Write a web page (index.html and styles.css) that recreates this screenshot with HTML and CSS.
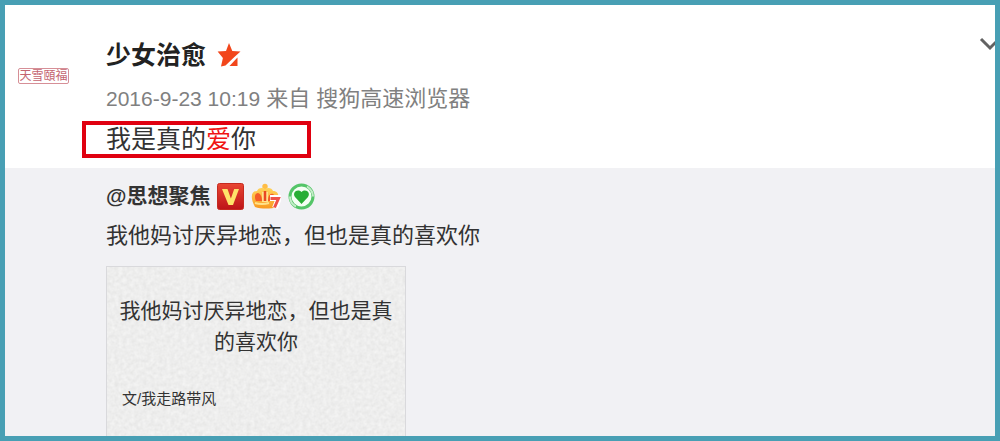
FILE: index.html
```html
<!DOCTYPE html>
<html lang="zh-CN">
<head>
<meta charset="utf-8">
<title>少女治愈</title>
<link rel="stylesheet" href="styles.css">
</head>
<body>
<main class="frame">
  <article class="post">
    <div class="avatar"><span class="stamp">天雪頤福</span></div>
    <div class="content">
      <header class="author">
        <h1 class="name">少女治愈</h1>
        <svg class="star" viewBox="0 0 24 26" aria-hidden="true">
          <path d="M12 1l3.300 8 8.200.5-6.100 5.600-8.900 8.400L4 24.600l1.900-8.700L.6 9.500 9 9z" fill="#f2461b"/>
          <path d="M20.500 15.500V24l-8-.1z" fill="#f2461b"/>
        </svg>
      </header>
      <p class="meta"><time class="date" datetime="2016-09-23T10:19">2016-9-23 10:19</time> 来自 搜狗高速浏览器</p>
      <p class="status">我是真的<em class="keyword">爱</em>你</p>
    </div>
    <button class="more" type="button" aria-label="更多">
      <svg class="chevron" viewBox="0 0 20 14" aria-hidden="true"><path d="M2 2l9 9 8-8" fill="none" stroke="#626262" stroke-width="3"/></svg>
    </button>
  </article>
  <section class="quote">
    <div class="source">
      <a class="handle" href="#">@思想聚焦</a>
      <svg class="badge" viewBox="0 0 27 27" aria-hidden="true">
        <defs><linearGradient id="red" x1="0" y1="0" x2="0" y2="1"><stop offset="0" stop-color="#e94632"/><stop offset="1" stop-color="#bd1418"/></linearGradient></defs>
        <rect x=".5" y=".5" width="26" height="26" rx="2" fill="url(#red)" stroke="#c52a20"/>
        <path d="M5 6h5.500l3.400 9.500L17.200 6H22l-6 16h-4.500z" fill="#ffe36a"/>
      </svg>
      <svg class="crown" viewBox="0 0 30 27" aria-hidden="true">
        <defs><linearGradient id="gold" x1="0" y1="0" x2="0" y2="1"><stop offset="0" stop-color="#ffd35a"/><stop offset="1" stop-color="#f99a20"/></linearGradient></defs>
        <circle cx="14" cy="3.500" r="2.700" fill="#ffbd45"/>
        <path d="M4 24C-1 15 0 8 6 8c2-4 6-3 8-2 3-2 7-1 8 2 6 0 7 6 4 16-6 2-16 2-22 0z" fill="url(#gold)"/>
        <path d="M5 18c-2-4-1-8 2-8 3 1 4 4 4 8zM17 18c0-5 2-8 5-7 3 2 2 4 1 7z" fill="#f45c27"/>
        <path d="M11 9h6v10h-6z" fill="#ffe28b"/>
        <path d="M14 8v10" stroke="#e94822" stroke-width="2.500"/>
        <path d="M4 20q7 2 14 0" fill="none" stroke="#ffe28b" stroke-width="2"/>
        <path d="M19 15h9l-4 10" fill="none" stroke="#fff" stroke-width="6"/>
        <path d="M19.500 15.500h8l-4 9" fill="none" stroke="#ef5148" stroke-width="3"/>
      </svg>
      <svg class="heart" viewBox="0 0 27 27" aria-hidden="true">
        <circle cx="13.500" cy="13.500" r="11.500" fill="#f5fff4" stroke="#54c568" stroke-width="3"/>
        <path d="M19 3.500q6 4 6 10M8 23.500q-6-3-6-10" fill="none" stroke="#c4ecc8" stroke-width="2"/>
        <path d="M13.500 21L7 14c-3-4 2-9 6.500-5 4.500-4 9.500 1 6.500 5z" fill="#28ae35"/>
      </svg>
    </div>
    <p class="quote-text">我他妈讨厌异地恋，但也是真的喜欢你</p>
    <figure class="card">
      <svg class="paper" aria-hidden="true">
        <filter id="grain" x="0" y="0" width="100%" height="100%">
          <feTurbulence type="fractalNoise" baseFrequency=".25" numOctaves="3" seed="4"/>
          <feColorMatrix values="0.16 0 0 0 .77  0.16 0 0 0 .77  0.16 0 0 0 .765  0 0 0 0 1"/>
        </filter>
        <rect width="100%" height="100%" filter="url(#grain)"/>
      </svg>
      <blockquote class="verse">我他妈讨厌异地恋，但也是真<br>的喜欢你</blockquote>
      <figcaption class="byline">文/我走路带风</figcaption>
    </figure>
  </section>
</main>
</body>
</html>
```
FILE: styles.css
```css
* { box-sizing: border-box; margin: 0; padding: 0; }

body {
  font-family: "Liberation Sans", "Noto Sans CJK SC", sans-serif;
  color: #333;
}

.frame {
  display: flex;
  flex-direction: column;
  height: 100vh;
  overflow: hidden;
  border: 5px solid #489fb4;
  background: #fff;
}

.post {
  display: flex;
  flex-shrink: 0;
  padding: 32px 0 10px;
}

.avatar {
  width: 77px;
  flex-shrink: 0;
  padding: 31px 0 0 13px;
}

.stamp {
  display: block;
  width: 51px;
  height: 16px;
  border: 1px solid #d68f97;
  border-radius: 2px;
  color: #c46570;
  font-size: 12px;
  line-height: 14px;
  text-align: center;
  white-space: nowrap;
}

.content { flex: 1; }

.author {
  display: flex;
  align-items: center;
  gap: 11px;
  height: 36px;
  padding-left: 24px;
}

.name {
  color: #222;
  font-size: 25px;
  line-height: 36px;
}

.star { width: 24px; height: 26px; }

.meta {
  height: 48px;
  padding-left: 24px;
  color: #808080;
  font-size: 22px;
  line-height: 52px;
}

.date { font-size: 21px; }

.status {
  width: 229px;
  height: 37px;
  padding-left: 20px;
  border: 4px solid #e00010;
  font-size: 25px;
  line-height: 28px;
}

.keyword { color: #f01414; font-style: normal; }

.more {
  align-self: flex-start;
  width: 16px;
  height: 14px;
  overflow: hidden;
  border: 0;
  background: none;
}

.chevron { display: block; width: 20px; height: 14px; }

.quote {
  flex: 1;
  min-height: 0;
  padding: 12px 24px 0 101px;
  background: #f1f1f4;
}

.source {
  display: flex;
  align-items: center;
  gap: 7px;
  height: 32px;
}

.handle {
  color: #333;
  font-size: 21px;
  font-weight: bold;
  line-height: 32px;
  text-decoration: none;
}

.badge, .heart { width: 27px; height: 27px; }
.crown { width: 30px; height: 27px; }

.quote-text {
  height: 54px;
  font-size: 22px;
  line-height: 48px;
}

.card {
  position: relative;
  width: 300px;
  height: 400px;
  padding: 28px 12px;
  border: 1px solid #d9d9dc;
  color: #333;
}

.paper {
  position: absolute;
  inset: 0;
  width: 100%;
  height: 100%;
}

.verse {
  position: relative;
  font-size: 21px;
  line-height: 31px;
  text-align: center;
  white-space: nowrap;
}

.byline {
  position: relative;
  padding: 31px 0 0 3px;
  font-size: 15px;
  line-height: 22px;
}
```
